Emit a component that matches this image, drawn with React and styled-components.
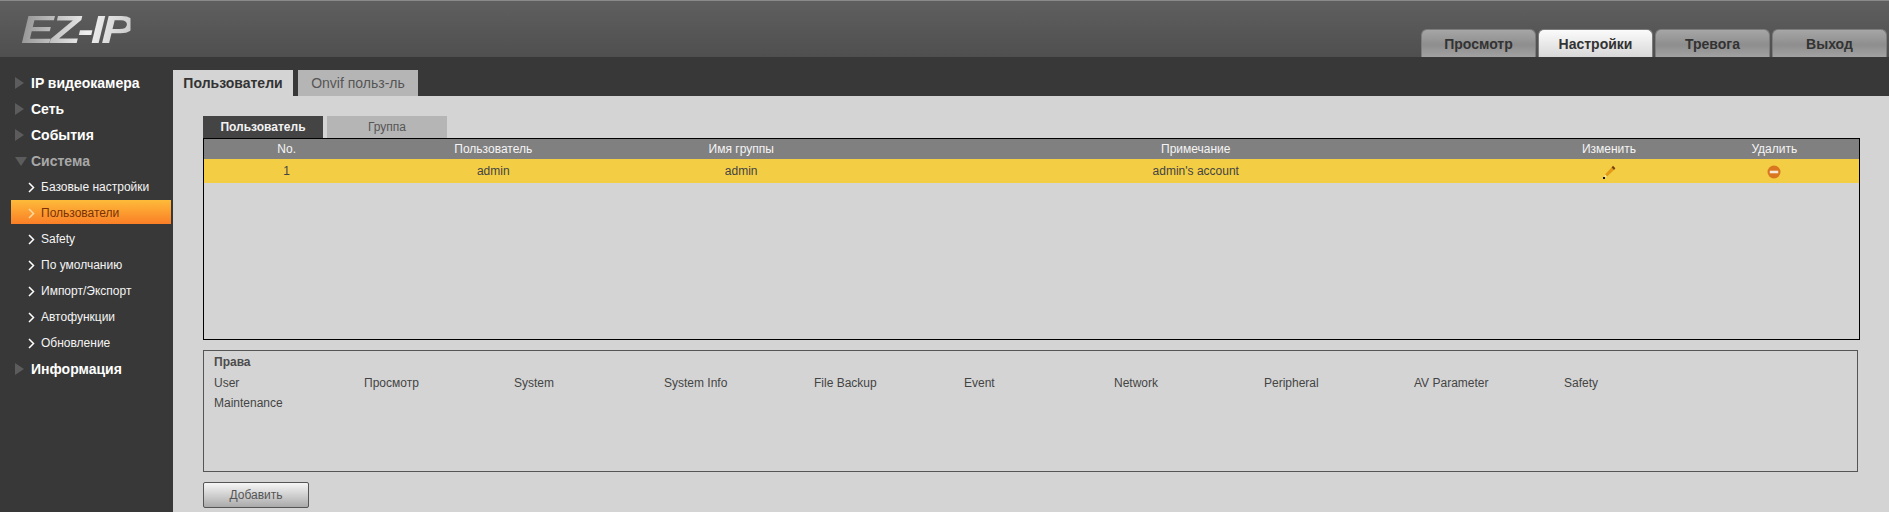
import React from "react";
import styled, { createGlobalStyle } from "styled-components";

const GlobalStyle = createGlobalStyle`
  html, body {
    margin: 0;
    height: 100%;
    overflow: hidden;
    background: #d4d4d4;
    font-family: "Liberation Sans", Arial, sans-serif;
    font-size: 12px;
  }
`;

const navTabs = ["Просмотр", "Настройки", "Тревога", "Выход"];
const subItems = [
  "Базовые настройки",
  "Пользователи",
  "Safety",
  "По умолчанию",
  "Импорт/Экспорт",
  "Автофункции",
  "Обновление",
];
const rights = [
  "User",
  "Просмотр",
  "System",
  "System Info",
  "File Backup",
  "Event",
  "Network",
  "Peripheral",
  "AV Parameter",
  "Safety",
  "Maintenance",
];

function App() {
  return (
    <Page>
      <GlobalStyle />
      <Header>
        <Logo>EZ-IP</Logo>
        <NavTabs>
          {navTabs.map((tab) => (
            <NavTab key={tab} $active={tab === "Настройки"}>
              {tab}
            </NavTab>
          ))}
        </NavTabs>
      </Header>
      <Body>
        <Sidebar>
          <MenuItem>
            <ClosedArrow />
            IP видеокамера
          </MenuItem>
          <MenuItem>
            <ClosedArrow />
            Сеть
          </MenuItem>
          <MenuItem>
            <ClosedArrow />
            События
          </MenuItem>
          <MenuItem $open>
            <OpenArrow />
            Система
          </MenuItem>
          {subItems.map((item) => (
            <SubItem key={item} $active={item === "Пользователи"}>
              <Chevron viewBox="0 0 7 11" $active={item === "Пользователи"}>
                <polyline
                  points="1,1 5.5,5.5 1,10"
                  fill="none"
                  stroke="currentColor"
                  strokeWidth="1.5"
                />
              </Chevron>
              {item}
            </SubItem>
          ))}
          <MenuItem>
            <ClosedArrow />
            Информация
          </MenuItem>
        </Sidebar>
        <Main>
          <PageTabs>
            <PageTab $active>Пользователи</PageTab>
            <PageTab>Onvif польз-ль</PageTab>
          </PageTabs>
          <Panel>
            <InnerTabs>
              <InnerTab $active>Пользователь</InnerTab>
              <InnerTab>Группа</InnerTab>
            </InnerTabs>
            <UserTable>
              <HeadRow>
                <span>No.</span>
                <span>Пользователь</span>
                <span>Имя группы</span>
                <span>Примечание</span>
                <span>Изменить</span>
                <span>Удалить</span>
              </HeadRow>
              <UserRow>
                <span>1</span>
                <span>admin</span>
                <span>admin</span>
                <span>admin's account</span>
                <span>
                  <IconSvg viewBox="0 0 14 14">
                    <path d="M3 9.5 L9.5 2.5 L12 5 L5 11.5 Z" fill="#e39a16" />
                    <path d="M9.6 2.4 L11 0.8 L13.4 3.2 L12 5 Z" fill="#7a3f10" />
                    <path d="M3 9.5 L5 11.5 L2.2 12.2 Z" fill="#f8e7ae" />
                    <rect x="1" y="12" width="2" height="2" fill="#111" />
                  </IconSvg>
                </span>
                <span>
                  <IconSvg viewBox="0 0 14 14">
                    <circle cx="7" cy="7" r="6.5" fill="#d9761f" />
                    <rect x="2.8" y="5.7" width="8.4" height="2.6" fill="#f6e9da" />
                  </IconSvg>
                </span>
              </UserRow>
            </UserTable>
            <RightsBox>
              <RightsTitle>Права</RightsTitle>
              <RightsGrid>
                {rights.map((right) => (
                  <RightItem key={right}>{right}</RightItem>
                ))}
              </RightsGrid>
            </RightsBox>
            <AddButton>Добавить</AddButton>
          </Panel>
        </Main>
      </Body>
    </Page>
  );
}

const Page = styled.div`
  width: 1889px;
  height: 512px;
  overflow: hidden;
  display: flex;
  flex-direction: column;
`;

const Header = styled.header`
  height: 57px;
  box-sizing: border-box;
  border-top: 1px solid #8a8a8a;
  background: linear-gradient(#5f5f5f, #4f4f4f);
  display: flex;
  justify-content: space-between;
  align-items: flex-end;
  padding: 0 2px 0 21px;
`;

const Logo = styled.div`
  align-self: flex-start;
  margin-top: 10px;
  font-size: 39px;
  line-height: 38px;
  font-weight: bold;
  font-style: italic;
  letter-spacing: -2.5px;
  transform: scaleX(1.26);
  transform-origin: left center;
  background: linear-gradient(100deg, #8e8e8e, #f0f0f0 60%, #c8c8c8);
  -webkit-background-clip: text;
  background-clip: text;
  color: transparent;
`;

const NavTabs = styled.nav`
  display: flex;
  gap: 2px;
`;

const NavTab = styled.div`
  width: 115px;
  height: 28px;
  box-sizing: border-box;
  border-radius: 6px 6px 0 0;
  border: 1px solid #7c7c7c;
  border-bottom: none;
  background: ${(p) =>
    p.$active
      ? "linear-gradient(#fbfbfb, #d8d8d8)"
      : "linear-gradient(#a6a6a6, #8e8e8e 55%, #a2a2a2)"};
  color: #333;
  font-size: 14px;
  font-weight: bold;
  line-height: 28px;
  text-align: center;
`;

const Body = styled.div`
  flex: 1;
  display: flex;
  min-height: 0;
`;

const Sidebar = styled.aside`
  width: 173px;
  flex-shrink: 0;
  box-sizing: border-box;
  padding-top: 13px;
  background: #383838;
`;

const MenuItem = styled.div`
  height: 26px;
  display: flex;
  align-items: center;
  padding-left: 15px;
  color: ${(p) => (p.$open ? "#a8a8a8" : "#fff")};
  font-size: 14px;
  font-weight: bold;
`;

const ClosedArrow = styled.i`
  width: 0;
  height: 0;
  margin-right: 7px;
  border-style: solid;
  border-width: 6px 0 6px 9px;
  border-color: transparent transparent transparent #5c5c5c;
`;

const OpenArrow = styled.i`
  width: 0;
  height: 0;
  margin-right: 4px;
  border-style: solid;
  border-width: 9px 6px 0 6px;
  border-color: #5c5c5c transparent transparent transparent;
`;

const SubItem = styled.div`
  height: 24px;
  box-sizing: border-box;
  margin: 0 2px 2px 11px;
  display: flex;
  align-items: center;
  padding: 2px 0 0 17px;
  font-size: 12px;
  color: ${(p) => (p.$active ? "#7a3208" : "#f4f4f4")};
  background: ${(p) => (p.$active ? "linear-gradient(#fdbb3a, #fb7f26)" : "none")};
`;

const Chevron = styled.svg`
  width: 7px;
  height: 11px;
  margin-right: 6px;
  color: ${(p) => (p.$active ? "#ffd9a0" : "#fff")};
`;

const Main = styled.main`
  flex: 1;
  min-width: 0;
  display: flex;
  flex-direction: column;
  background: #d4d4d4;
`;

const PageTabs = styled.div`
  height: 39px;
  flex-shrink: 0;
  box-sizing: border-box;
  padding-top: 13px;
  background: #383838;
  display: flex;
  gap: 5px;
`;

const PageTab = styled.div`
  width: 120px;
  height: 26px;
  line-height: 26px;
  text-align: center;
  font-size: 14px;
  font-weight: ${(p) => (p.$active ? "bold" : "normal")};
  color: ${(p) => (p.$active ? "#333" : "#555")};
  background: ${(p) => (p.$active ? "#d4d4d4" : "#b5b5b5")};
`;

const Panel = styled.div`
  padding: 20px 29px 0 30px;
  flex: 1;
`;

const InnerTabs = styled.div`
  display: flex;
  gap: 4px;
`;

const InnerTab = styled.div`
  width: 120px;
  height: 22px;
  line-height: 22px;
  text-align: center;
  font-size: 12px;
  font-weight: ${(p) => (p.$active ? "bold" : "normal")};
  color: ${(p) => (p.$active ? "#f2f2f2" : "#555")};
  background: ${(p) => (p.$active ? "#444" : "#b5b5b5")};
`;

const UserTable = styled.div`
  height: 202px;
  box-sizing: border-box;
  border: 1px solid #000;
`;

const Row = styled.div`
  display: grid;
  grid-template-columns: 10% 15% 15% 40% 10% 10%;
  padding-right: 2px;
  text-align: center;
  align-items: center;
`;

const HeadRow = styled(Row)`
  height: 20px;
  background: #808080;
  color: #f4f4f4;
`;

const UserRow = styled(Row)`
  height: 24px;
  background: #f3cd44;
  color: #444;
`;

const IconSvg = styled.svg`
  width: 14px;
  height: 14px;
  display: block;
  margin: 2px auto 0;
`;

const RightsBox = styled.section`
  height: 122px;
  box-sizing: border-box;
  margin-top: 10px;
  margin-right: 2px;
  padding: 1px 10px;
  border: 1px solid #555;
  color: #444;
`;

const RightsTitle = styled.div`
  height: 21px;
  line-height: 20px;
  font-weight: bold;
  color: #4c4c4c;
`;

const RightsGrid = styled.div`
  display: flex;
  flex-wrap: wrap;
`;

const RightItem = styled.div`
  width: 150px;
  height: 20px;
  line-height: 20px;
`;

const AddButton = styled.button`
  display: block;
  width: 106px;
  height: 26px;
  margin-top: 10px;
  padding: 0;
  border: 1px solid #555;
  border-radius: 2px;
  background: linear-gradient(#f6f6f6, #aaa);
  color: #555;
  font-family: inherit;
  font-size: 12px;
`;

export default App;
